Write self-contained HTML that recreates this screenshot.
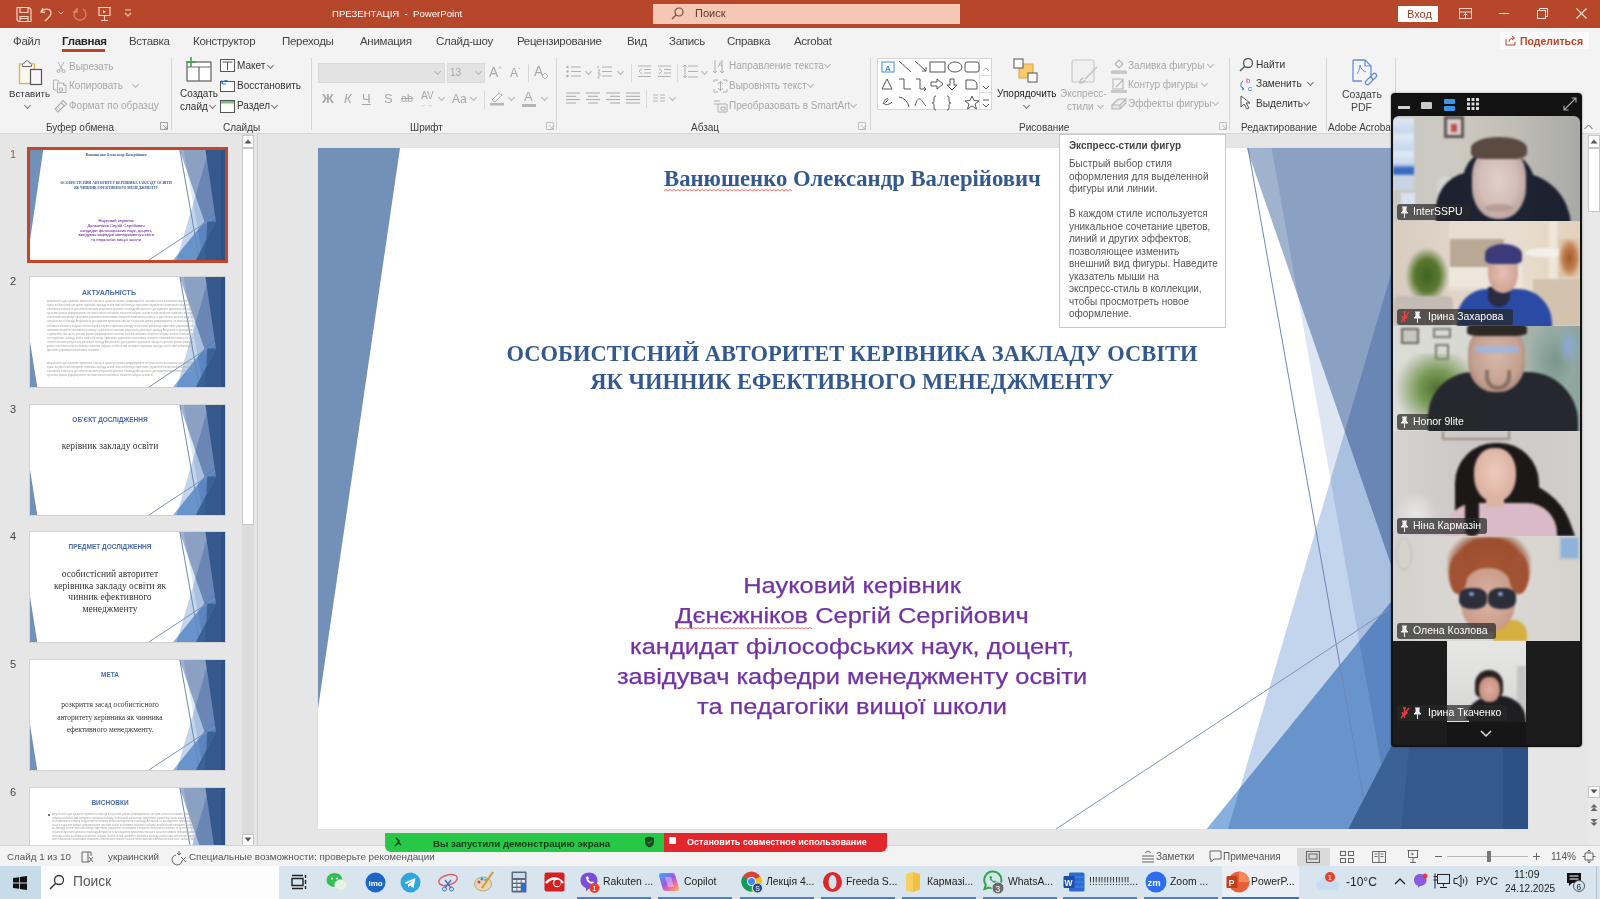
<!DOCTYPE html>
<html><head><meta charset="utf-8">
<style>
*{margin:0;padding:0;box-sizing:border-box}
html,body{width:1600px;height:899px;overflow:hidden;background:#e6e6e6;font-family:"Liberation Sans",sans-serif;color:#262626}
.a{position:absolute}
.t{position:absolute;white-space:nowrap;line-height:1}
svg{position:absolute;overflow:visible}
#title{left:0;top:0;width:1600px;height:28px;background:#b7472a}
#tabs{left:0;top:28px;width:1600px;height:27px;background:#f3f3f3}
#ribbon{left:0;top:55px;width:1600px;height:79px;background:#f3f3f3;border-bottom:1px solid #d6d6d6}
.tab{position:absolute;top:35px;font-size:11.5px;letter-spacing:-0.3px;color:#444}
.lbl{position:absolute;top:122px;font-size:10px;color:#3c3c3c}
.sep{position:absolute;top:58px;width:1px;height:72px;background:#d4d4d4}
.rt{position:absolute;font-size:11px;color:#333;white-space:nowrap;line-height:1}
.dis{color:#a8a8a8}
.chev{position:absolute;width:5px;height:5px;border-right:1px solid #777;border-bottom:1px solid #777;transform:rotate(45deg)}
.chev.dis{border-color:#b5b5b5}
</style></head><body>

<!-- TITLE BAR -->
<div id="title" class="a"></div>
<div class="t" style="left:332px;top:8.5px;font-size:9.6px;color:#fff">ПРЕЗЕНТАЦІЯ&nbsp;&nbsp;-&nbsp;&nbsp;PowerPoint</div>
<div class="a" style="left:653px;top:4px;width:307px;height:20px;background:#f5c8b6"></div>
<div class="t" style="left:695px;top:8px;font-size:11px;color:#5a3a30">Поиск</div>
<div class="a" style="left:1398px;top:6px;width:40px;height:16px;background:#fff"></div>
<div class="t" style="left:1407px;top:9px;font-size:11px;color:#9e3c22">Вход</div>

<!-- TABS -->
<div id="tabs" class="a"></div>
<div class="tab" style="left:13px">Файл</div>
<div class="tab" style="left:62px;font-weight:bold;color:#262626">Главная</div>
<div class="a" style="left:62px;top:49px;width:43px;height:3px;background:#b7472a"></div>
<div class="tab" style="left:129px">Вставка</div>
<div class="tab" style="left:193px">Конструктор</div>
<div class="tab" style="left:282px">Переходы</div>
<div class="tab" style="left:360px">Анимация</div>
<div class="tab" style="left:436px">Слайд-шоу</div>
<div class="tab" style="left:517px">Рецензирование</div>
<div class="tab" style="left:627px">Вид</div>
<div class="tab" style="left:669px">Запись</div>
<div class="tab" style="left:727px">Справка</div>
<div class="tab" style="left:794px">Acrobat</div>
<div class="a" style="left:1500px;top:32px;width:89px;height:17px;background:#fbfbfb"></div>
<div class="t" style="left:1520px;top:36px;font-size:10.5px;font-weight:bold;color:#b7472a">Поделиться</div>
<svg style="left:1505px;top:35px" width="12" height="11" viewBox="0 0 12 11"><path d="M1 4v6h9V7" fill="none" stroke="#b7472a"/><path d="M4 7c0-3 2-4 5-4M7 1l2.5 2L7 5" fill="none" stroke="#b7472a"/></svg>

<!-- RIBBON -->
<div id="ribbon" class="a"></div>
<div class="sep" style="left:171px"></div>
<div class="sep" style="left:311px"></div>
<div class="sep" style="left:556px"></div>
<div class="sep" style="left:870px"></div>
<div class="sep" style="left:1229px"></div>
<div class="sep" style="left:1326px"></div>
<div class="sep" style="left:1395px"></div>
<div class="lbl" style="left:46px">Буфер обмена</div>
<div class="lbl" style="left:223px">Слайды</div>
<div class="lbl" style="left:410px">Шрифт</div>
<div class="lbl" style="left:691px">Абзац</div>
<div class="lbl" style="left:1019px">Рисование</div>
<div class="lbl" style="left:1241px">Редактирование</div>
<div class="lbl" style="left:1328px">Adobe Acrobat</div>


<!-- clipboard group -->
<svg style="left:17px;top:59px" width="28" height="28" viewBox="0 0 28 28">
 <rect x="2.5" y="5" width="15" height="19.5" fill="#fbf7ee" stroke="#e2b24a" stroke-width="1.3"/>
 <path d="M5.5 7.5 v-2 c0-1 1-1.5 2-1.5 c0.5-1.5 1.5-2.3 2.5-2.3 s2 0.8 2.5 2.3 c1 0 2 0.5 2 1.5 v2z" fill="#f3f3f3" stroke="#6a6a6a" stroke-width="1"/>
 <rect x="13.5" y="10.5" width="11" height="15" fill="#f6f6fa" stroke="#555" stroke-width="1.2"/>
</svg>
<div class="rt" style="left:9px;top:89px;font-size:9.7px;color:#333">Вставить</div>
<div class="chev" style="left:25px;top:103px"></div>
<svg style="left:55px;top:61px" width="12" height="12" viewBox="0 0 12 12"><path d="M3 1 L8 10 M9 1 L4 10" stroke="#b0b0b0" stroke-width="1" fill="none"/><circle cx="3.5" cy="10" r="1.5" fill="none" stroke="#b0b0b0"/><circle cx="8.5" cy="10" r="1.5" fill="none" stroke="#b0b0b0"/></svg>
<div class="rt dis" style="left:69px;top:62px;font-size:10px">Вырезать</div>
<svg style="left:53px;top:79px" width="14" height="14" viewBox="0 0 14 14"><path d="M0.5 1h4l1 1v1 M0.5 1v10h3" fill="none" stroke="#b0b0b0"/><path d="M4.5 4h6l2.5 2.5v7h-8.5z M10.5 4v2.5h2.5 M6.5 9h3v3h-3z" fill="none" stroke="#b0b0b0"/></svg>
<div class="rt dis" style="left:69px;top:81px;font-size:10px">Копировать</div>
<div class="chev dis" style="left:133px;top:82px"></div>
<svg style="left:54px;top:99px" width="14" height="14" viewBox="0 0 14 14"><path d="M9 1.5l3.5 3.5-2 2-3.5-3.5z M7 4L1 10l3 3 6-6" fill="none" stroke="#b0b0b0" stroke-width="1.1"/><path d="M2.5 9.5l2 2M4 8l2 2" stroke="#b0b0b0" stroke-width="0.8"/></svg>
<div class="rt dis" style="left:69px;top:101px;font-size:10px">Формат по образцу</div>
<svg style="left:160px;top:122px" width="8" height="8" viewBox="0 0 8 8"><path d="M0.5 0.5h7v7h-7z M3 3l4 4 M7 4v3h-3" stroke="#8a8a8a" stroke-width="0.8" fill="none"/></svg>

<!-- slides group -->
<svg style="left:184px;top:56px" width="30" height="28" viewBox="0 0 30 28">
 <rect x="3" y="6" width="24" height="19" fill="#fff" stroke="#6a6a6a" stroke-width="1.3"/>
 <path d="M3 11h24 M15 11v14" stroke="#6a6a6a" stroke-width="1.2"/>
 <path d="M7 1v10 M2 6h10" stroke="#3fa34d" stroke-width="1.6"/>
</svg>
<div class="rt" style="left:180px;top:89px;font-size:10px">Создать</div>
<div class="rt" style="left:180px;top:102px;font-size:10px">слайд</div>
<div class="chev" style="left:210px;top:103px"></div>
<svg style="left:220px;top:59px" width="15" height="13" viewBox="0 0 15 13"><rect x="0.5" y="0.5" width="14" height="12" fill="#fff" stroke="#555"/><path d="M2.5 3h10 M7.5 3v8" stroke="#555"/></svg>
<div class="rt" style="left:237px;top:61px;font-size:10px">Макет</div>
<div class="chev" style="left:268px;top:63px"></div>
<svg style="left:220px;top:79px" width="15" height="13" viewBox="0 0 15 13"><rect x="0.5" y="2.5" width="14" height="10" fill="#fff" stroke="#555"/><path d="M2 5 A4 4 0 0 1 8 2 M2 1v4h4" stroke="#2d7fd0" fill="none"/></svg>
<div class="rt" style="left:237px;top:81px;font-size:10px">Восстановить</div>
<svg style="left:220px;top:99px" width="15" height="14" viewBox="0 0 15 14"><rect x="0.5" y="1.5" width="14" height="12" fill="#fff" stroke="#555"/><rect x="1" y="2" width="13" height="2.5" fill="#7bbf7a"/></svg>
<div class="rt" style="left:237px;top:101px;font-size:10px">Раздел</div>
<div class="chev" style="left:272px;top:103px"></div>

<!-- font group -->
<div class="a" style="left:318px;top:63px;width:127px;height:20px;background:#e3e3e3;border:1px solid #dadada"></div>
<div class="chev dis" style="left:435px;top:69px"></div>
<div class="a" style="left:447px;top:63px;width:38px;height:20px;background:#e3e3e3;border:1px solid #dadada"></div>
<div class="rt dis" style="left:450px;top:68px;font-size:10px">13</div>
<div class="chev dis" style="left:476px;top:69px"></div>
<div class="rt dis" style="left:489px;top:65px;font-size:14px">A<span style="font-size:7px;vertical-align:top">^</span></div>
<div class="rt dis" style="left:510px;top:67px;font-size:12px">A<span style="font-size:7px;vertical-align:top">ˇ</span></div>
<div class="a" style="left:528px;top:64px;width:1px;height:18px;background:#d8d8d8"></div>
<div class="rt dis" style="left:534px;top:64px;font-size:14px">A</div>
<svg style="left:541px;top:72px" width="8" height="8" viewBox="0 0 8 8"><path d="M1 4l3-3 3 3-3 3z" stroke="#b0b0b0" fill="none"/></svg>
<div class="rt dis" style="left:322px;top:92px;font-size:13px;font-weight:bold">Ж</div>
<div class="rt dis" style="left:344px;top:92px;font-size:13px;font-style:italic">К</div>
<div class="rt dis" style="left:362px;top:92px;font-size:13px;text-decoration:underline">Ч</div>
<div class="rt dis" style="left:384px;top:92px;font-size:13px">S</div>
<div class="rt dis" style="left:401px;top:93px;font-size:11px;text-decoration:line-through">ab</div>
<div class="rt dis" style="left:421px;top:91px;font-size:10px">AV</div>
<div class="rt dis" style="left:421px;top:102px;font-size:6px">←→</div>
<div class="chev dis" style="left:439px;top:95px"></div>
<div class="rt dis" style="left:452px;top:93px;font-size:12px">Aa</div>
<div class="chev dis" style="left:471px;top:95px"></div>
<div class="a" style="left:484px;top:91px;width:1px;height:18px;background:#d8d8d8"></div>
<svg style="left:489px;top:90px" width="16" height="16" viewBox="0 0 16 16"><path d="M3 10 L10 3 L13 5 L6 12 Z" stroke="#b0b0b0" fill="none"/><rect x="1" y="13" width="14" height="2.5" fill="#b5b5b5"/></svg>
<div class="chev dis" style="left:509px;top:95px"></div>
<div class="rt dis" style="left:524px;top:90px;font-size:13px">A</div>
<div class="a" style="left:522px;top:104px;width:14px;height:3px;background:#b5b5b5"></div>
<div class="chev dis" style="left:542px;top:95px"></div>
<svg style="left:546px;top:122px" width="8" height="8" viewBox="0 0 8 8"><path d="M0.5 0.5h7v7h-7z M3 3l4 4 M7 4v3h-3" stroke="#b5b5b5" stroke-width="0.8" fill="none"/></svg>


<!-- paragraph group -->
<svg style="left:566px;top:65px" width="15" height="13" viewBox="0 0 15 13"><g fill="#b0b0b0"><circle cx="1.5" cy="2" r="1.2"/><circle cx="1.5" cy="6.5" r="1.2"/><circle cx="1.5" cy="11" r="1.2"/></g><path d="M5 2h10M5 6.5h10M5 11h10" stroke="#b0b0b0"/></svg>
<div class="chev dis" style="left:586px;top:69px"></div>
<svg style="left:597px;top:65px" width="15" height="13" viewBox="0 0 15 13"><path d="M1 0.5v3M1 5h2l-2 3h2M1 9h2v2H1v2h2" stroke="#b0b0b0" stroke-width="0.8" fill="none"/><path d="M5 2h10M5 6.5h10M5 11h10" stroke="#b0b0b0"/></svg>
<div class="chev dis" style="left:618px;top:69px"></div>
<div class="a" style="left:631px;top:64px;width:1px;height:18px;background:#d8d8d8"></div>
<svg style="left:638px;top:65px" width="13" height="13" viewBox="0 0 13 13"><path d="M0 1h13M6 4.5h7M6 8h7M0 11.5h13M4 3.5L1 6.2 4 9" stroke="#b0b0b0" fill="none"/></svg>
<svg style="left:658px;top:65px" width="13" height="13" viewBox="0 0 13 13"><path d="M0 1h13M6 4.5h7M6 8h7M0 11.5h13M1 3.5L4 6.2 1 9" stroke="#b0b0b0" fill="none"/></svg>
<div class="a" style="left:677px;top:64px;width:1px;height:18px;background:#d8d8d8"></div>
<svg style="left:682px;top:64px" width="16" height="15" viewBox="0 0 16 15"><path d="M6 2h10M6 7.5h10M6 13h10M3 1v13M1 3l2-2 2 2M1 12l2 2 2-2" stroke="#b0b0b0" fill="none"/></svg>
<div class="chev dis" style="left:702px;top:69px"></div>
<svg style="left:713px;top:59px" width="14" height="15" viewBox="0 0 14 15"><path d="M2 1v13M0 12l2 2 2-2M9 1v13M7 12l2 2 2-2" stroke="#b0b0b0" fill="none"/><text x="5" y="8" font-size="7" fill="#b0b0b0" font-family="Liberation Sans">A</text></svg>
<div class="rt dis" style="left:729px;top:61px;font-size:10px">Направление текста</div>
<div class="chev dis" style="left:825px;top:62px"></div>
<svg style="left:713px;top:79px" width="15" height="14" viewBox="0 0 15 14"><path d="M1 3V1h4M10 1h4v2M14 10v3h-4M5 13H1v-3M7.5 2v10M5 5l2.5-2.5L10 5M5 9l2.5 2.5L10 9" stroke="#b0b0b0" fill="none"/></svg>
<div class="rt dis" style="left:729px;top:81px;font-size:10px">Выровнять текст</div>
<div class="chev dis" style="left:808px;top:82px"></div>
<svg style="left:713px;top:99px" width="15" height="14" viewBox="0 0 15 14"><path d="M1 2h6M1 5h4M5 5h9v8H5z M8 8h4v3H8z" stroke="#b0b0b0" fill="none"/></svg>
<div class="rt dis" style="left:729px;top:101px;font-size:10px">Преобразовать в SmartArt</div>
<div class="chev dis" style="left:851px;top:102px"></div>
<svg style="left:566px;top:92px" width="15" height="12" viewBox="0 0 15 12"><path d="M0 1h14M0 4.3h10M0 7.6h14M0 11h10" stroke="#a8a8a8"/></svg>
<svg style="left:586px;top:92px" width="15" height="12" viewBox="0 0 15 12"><path d="M0 1h14M2 4.3h10M0 7.6h14M2 11h10" stroke="#a8a8a8"/></svg>
<svg style="left:606px;top:92px" width="15" height="12" viewBox="0 0 15 12"><path d="M0 1h14M4 4.3h10M0 7.6h14M4 11h10" stroke="#a8a8a8"/></svg>
<svg style="left:626px;top:92px" width="15" height="12" viewBox="0 0 15 12"><path d="M0 1h14M0 4.3h14M0 7.6h14M0 11h14" stroke="#a8a8a8"/></svg>
<div class="a" style="left:646px;top:90px;width:1px;height:18px;background:#d8d8d8"></div>
<svg style="left:653px;top:94px" width="12" height="8" viewBox="0 0 12 8"><path d="M0 1h5M7 1h5M0 4h5M7 4h5M0 7h5M7 7h5" stroke="#b5b5b5"/></svg>
<div class="chev dis" style="left:670px;top:95px"></div>
<svg style="left:858px;top:122px" width="8" height="8" viewBox="0 0 8 8"><path d="M0.5 0.5h7v7h-7z M3 3l4 4 M7 4v3h-3" stroke="#b5b5b5" stroke-width="0.8" fill="none"/></svg>

<!-- drawing group -->
<div class="a" style="left:877px;top:58px;width:115px;height:52px;background:#fff;border:1px solid #d6d6d6"></div>
<div class="a" style="left:979px;top:58px;width:13px;height:52px;border-left:1px solid #e0e0e0"></div>
<div class="a" style="left:979px;top:75px;width:13px;height:1px;background:#dcdcdc"></div>
<div class="a" style="left:979px;top:92px;width:13px;height:1px;background:#dcdcdc"></div>
<svg style="left:877px;top:58px" width="115" height="52" viewBox="0 0 115 52">
 <g fill="none" stroke="#555" stroke-width="1">
  <rect x="5" y="4" width="12" height="10" stroke="#3c8fd6"/>
  <path d="M22 3 L34 14 M38 3 L49 13 M49 9v4h-4"/>
  <rect x="53" y="4" width="15" height="10"/>
  <ellipse cx="78" cy="9" rx="7" ry="5"/>
  <rect x="88" y="4" width="14" height="10" rx="2"/>
  <path d="M5 31 L10 21 L15 31 Z"/>
  <path d="M22 21 H27 V31 H34"/>
  <path d="M39 21 H43 V31 H49 M47 29l2 2-2 2"/>
  <path d="M54 24h6v-3l6 5-6 5v-3h-6z"/>
  <path d="M73 21h4v6h3l-5 5-5-5h3z"/>
  <path d="M89 22h6a5 5 0 0 1 5 5v4H89z"/>
  <path d="M6 46c3-8 8-6 3-2s4 3 6 0"/>
  <path d="M22 39 a12 12 0 0 1 10 10"/>
  <path d="M38 48 c4-14 7-4 11 0"/>
  <path d="M59 38c-2 0-2 1-2 4s-1 3-2 3c1 0 2 0 2 3s0 4 2 4"/>
  <path d="M70 38c2 0 2 1 2 4s1 3 2 3c-1 0-2 0-2 3s0 4-2 4"/>
  <path d="M95 38l2 4.5 5 .5-4 3 1.5 5-4.5-3-4.5 3 1.5-5-4-3 5-.5z"/>
 </g>
 <text x="8" y="13" font-size="8" fill="#3c8fd6" font-family="Liberation Sans" font-weight="bold">A</text>
 <path d="M106 13l3-3 3 3" stroke="#bbb" fill="none"/>
 <path d="M106 28l3 3 3-3" stroke="#555" fill="none"/>
 <path d="M106 42h6M106 46l3 3 3-3" stroke="#555" fill="none"/>
</svg>
<svg style="left:1013px;top:58px" width="26" height="26" viewBox="0 0 26 26">
 <rect x="6" y="6" width="14" height="14" fill="#f9c96b" stroke="#d9a43a"/>
 <rect x="1" y="1" width="9" height="9" fill="#fff" stroke="#555"/>
 <rect x="15" y="15" width="9" height="9" fill="#fff" stroke="#555"/>
</svg>
<div class="rt" style="left:997px;top:89px;font-size:10px;color:#222">Упорядочить</div>
<div class="chev" style="left:1024px;top:103px"></div>
<svg style="left:1071px;top:59px" width="28" height="27" viewBox="0 0 28 27"><rect x="1" y="1" width="22" height="22" rx="2" fill="#f0f0f0" stroke="#c8c8c8" stroke-width="1.2"/><path d="M26 8 L14 20 M12 19c-2 1-3 3-3 5 2 0 4-1 5-3" stroke="#c0c0c0" stroke-width="1.5" fill="none"/></svg>
<div class="rt dis" style="left:1060px;top:89px;font-size:10px">Экспресс-</div>
<div class="rt dis" style="left:1067px;top:102px;font-size:10px">стили</div>
<div class="chev dis" style="left:1098px;top:103px"></div>
<svg style="left:1111px;top:59px" width="16" height="15" viewBox="0 0 16 15"><path d="M4 5 L8 1 L12 5 L8 9 Z M1 12h14" stroke="#b5b5b5" stroke-width="1.2" fill="none"/><rect x="0" y="12" width="16" height="3" fill="#c8c8c8"/></svg>
<div class="rt dis" style="left:1128px;top:61px;font-size:10px">Заливка фигуры</div>
<div class="chev dis" style="left:1208px;top:62px"></div>
<svg style="left:1111px;top:78px" width="16" height="15" viewBox="0 0 16 15"><path d="M2 1h10v10H2z M5 9l7-7" stroke="#b5b5b5" stroke-width="1.1" fill="none"/><rect x="0" y="12" width="16" height="3" fill="#c8c8c8"/></svg>
<div class="rt dis" style="left:1128px;top:80px;font-size:10px">Контур фигуры</div>
<div class="chev dis" style="left:1202px;top:81px"></div>
<svg style="left:1111px;top:97px" width="16" height="14" viewBox="0 0 16 14"><path d="M1 8 L7 2 H15 L9 8 Z M1 8v4h8l6-6V2 M9 8v4" stroke="#b5b5b5" stroke-width="1.1" fill="#e6e6e6"/></svg>
<div class="rt dis" style="left:1128px;top:99px;font-size:10px">Эффекты фигуры</div>
<div class="chev dis" style="left:1213px;top:100px"></div>
<svg style="left:1219px;top:122px" width="8" height="8" viewBox="0 0 8 8"><path d="M0.5 0.5h7v7h-7z M3 3l4 4 M7 4v3h-3" stroke="#b5b5b5" stroke-width="0.8" fill="none"/></svg>

<!-- editing group -->
<svg style="left:1239px;top:57px" width="15" height="15" viewBox="0 0 15 15"><circle cx="9" cy="6" r="4.5" fill="none" stroke="#555" stroke-width="1.3"/><path d="M6 9 L1 14" stroke="#555" stroke-width="1.5"/></svg>
<div class="rt" style="left:1256px;top:60px;font-size:10.2px">Найти</div>
<svg style="left:1239px;top:76px" width="16" height="16" viewBox="0 0 16 16"><text x="7" y="7" font-size="8" fill="#c03fb8" font-family="Liberation Sans">b</text><text x="9" y="15" font-size="8" fill="#2d7fd0" font-family="Liberation Sans">c</text><path d="M4 5 C1 7 1 12 5 13 M3 11l2 2-2 1" stroke="#2d7fd0" fill="none"/></svg>
<div class="rt" style="left:1256px;top:79px;font-size:10.2px">Заменить</div>
<div class="chev" style="left:1308px;top:80px"></div>
<svg style="left:1240px;top:95px" width="12" height="15" viewBox="0 0 12 15"><path d="M1 1 L1 12 L4 9 L7 14 L9 13 L6 8 L10 8 Z" fill="#fff" stroke="#555"/></svg>
<div class="rt" style="left:1256px;top:99px;font-size:10.2px">Выделить</div>
<div class="chev" style="left:1304px;top:100px"></div>

<!-- acrobat group -->
<svg style="left:1350px;top:59px" width="27" height="27" viewBox="0 0 27 27"><path d="M3 1h12l6 6v11 M3 1v21h9" fill="#f4f7fc" stroke="#6a8fd8" stroke-width="1.3"/><path d="M15 1v6h6" fill="none" stroke="#6a8fd8" stroke-width="1.2"/><path d="M7 15c2-3 3-6 3-9 1 4 3 6 6 7" fill="none" stroke="#6a8fd8"/><path d="M16 22 l3-3 a2 2 0 0 1 3 3 l-3 3 a2 2 0 0 1-3-3z M20 18l3-3a2 2 0 0 1 3 3l-3 3" fill="none" stroke="#6a8fd8" stroke-width="1.3"/></svg>
<div class="rt" style="left:1342px;top:89px;font-size:10.5px;color:#444">Создать</div>
<div class="rt" style="left:1351px;top:102px;font-size:10.5px;color:#444">PDF</div>


<svg style="left:15px;top:6px" width="18" height="17" viewBox="0 0 18 17"><path d="M2 1.5h12l2 2v12H3.5L2 14z M5 1.5v5h8v-5 M5 15.5v-5h8v5 M5 12.5h8" fill="none" stroke="#f7d3c6" stroke-width="1.2"/></svg>
<svg style="left:40px;top:6px" width="14" height="16" viewBox="0 0 14 16"><path d="M3 2 L1 6 L5 6.5 M1.5 5.5 C4 2 11 2 11 7 C11 10 8 12 5 15" fill="none" stroke="#f7d3c6" stroke-width="1.3"/></svg>
<svg style="left:58px;top:11px" width="6" height="4" viewBox="0 0 6 4"><path d="M0.5 0.5L3 3l2.5-2.5" fill="none" stroke="#f3c4b4"/></svg>
<svg style="left:72px;top:7px" width="16" height="16" viewBox="0 0 16 16"><path d="M5 2 A6 6 0 1 0 11 2 M5 1v4H1" fill="none" stroke="#d88a72" stroke-width="1.3"/></svg>
<svg style="left:97px;top:6px" width="15" height="16" viewBox="0 0 15 16"><path d="M1 1.5h13 M2 1.5v8h11v-8 M7.5 9.5v5 M4 14.5h7" fill="none" stroke="#f7d3c6" stroke-width="1.2"/><path d="M6 4v3.5l3-1.7z" fill="#f7d3c6"/></svg>
<svg style="left:124px;top:9px" width="8" height="9" viewBox="0 0 8 9"><path d="M1 1h6M1 4l3 3 3-3" fill="none" stroke="#f3c4b4" stroke-width="1.1"/></svg>
<svg style="left:671px;top:7px" width="13" height="13" viewBox="0 0 13 13"><circle cx="8" cy="5" r="4" fill="none" stroke="#7b4a3c" stroke-width="1.2"/><path d="M5 8L1 12" stroke="#7b4a3c" stroke-width="1.3"/></svg>
<svg style="left:1459px;top:8px" width="13" height="11" viewBox="0 0 13 11"><rect x="0.5" y="0.5" width="12" height="10" fill="none" stroke="#f7d3c6"/><path d="M0.5 4h12 M6.5 4v6.5" stroke="#f7d3c6"/><path d="M4.5 7.5l2-2 2 2" fill="none" stroke="#f7d3c6"/></svg>
<div class="a" style="left:1499px;top:13px;width:10px;height:1px;background:#f7e0d6"></div>
<svg style="left:1537px;top:8px" width="11" height="11" viewBox="0 0 11 11"><rect x="0.5" y="2.5" width="8" height="8" fill="none" stroke="#f7e0d6"/><path d="M2.5 2.5v-2h8v8h-2" fill="none" stroke="#f7e0d6"/></svg>
<svg style="left:1576px;top:8px" width="11" height="11" viewBox="0 0 11 11"><path d="M0.5 0.5l10 10M10.5 0.5l-10 10" stroke="#f7e0d6" stroke-width="1.1"/></svg>
<svg style="left:1584px;top:124px" width="9" height="6" viewBox="0 0 9 6"><path d="M0.5 5l4-4 4 4" fill="none" stroke="#666"/></svg>


<!-- MAIN AREA -->

<svg width="0" height="0" style="position:absolute">
 <defs>
  <symbol id="deco" viewBox="0 0 1210 680" preserveAspectRatio="none">
   <polygon points="0,0 82,0 0,560" fill="#7290b8"/>
   <g style="isolation:isolate">
   <polygon points="953.6,0 1210,0 1210,680 1074.6,680" fill="#dde6f2" style="mix-blend-mode:multiply"/>
   <polygon points="928.6,0 1210,0 1210,300 1082,442" fill="#9fb3cf" style="mix-blend-mode:multiply"/>
   <polygon points="1082,442 1210,300 1210,680 888.7,680" fill="#88b0dc" style="mix-blend-mode:multiply"/>
   <polygon points="1110,0 1210,0 1210,680 910,680" fill="#c3d5ec" style="mix-blend-mode:multiply"/>
   </g>
   <line x1="930" y1="0" x2="1051" y2="680" stroke="#6a88b4" stroke-width="1" vector-effect="non-scaling-stroke"/>
   <line x1="738" y1="680" x2="1208" y2="370.6" stroke="#7d95b3" stroke-width="1" vector-effect="non-scaling-stroke"/>
     <polygon points="1089,0 1210,0 1210,680 1030.5,680 1154,442" fill="#35598c"/>
   <polygon points="1185,0 1210,0 1210,680 1185,680" fill="#2d5185"/>
   <polygon points="1030.5,680 1083,680 1092,590 1100,442 1154,442" fill="#3c6295"/>
</symbol>
  <symbol id="deco2" viewBox="0 0 1210 680" preserveAspectRatio="none">
   <polygon points="0,400 0,680 45,680" fill="#7290b8"/>
   <g style="isolation:isolate">
   <polygon points="953.6,0 1210,0 1210,680 1074.6,680" fill="#dde6f2" style="mix-blend-mode:multiply"/>
   <polygon points="928.6,0 1210,0 1210,300 1082,442" fill="#9fb3cf" style="mix-blend-mode:multiply"/>
   <polygon points="1082,442 1210,300 1210,680 888.7,680" fill="#88b0dc" style="mix-blend-mode:multiply"/>
   <polygon points="1110,0 1210,0 1210,680 910,680" fill="#c3d5ec" style="mix-blend-mode:multiply"/>
   </g>
   <line x1="930" y1="0" x2="1051" y2="680" stroke="#6a88b4" stroke-width="1" vector-effect="non-scaling-stroke"/>
   <line x1="738" y1="680" x2="1208" y2="370.6" stroke="#7d95b3" stroke-width="1" vector-effect="non-scaling-stroke"/>
     <polygon points="1089,0 1210,0 1210,680 1030.5,680 1154,442" fill="#35598c"/>
   <polygon points="1185,0 1210,0 1210,680 1185,680" fill="#2d5185"/>
   <polygon points="1030.5,680 1083,680 1092,590 1100,442 1154,442" fill="#3c6295"/>
</symbol>
 </defs>
</svg>

<!-- SLIDE PANE -->
<div class="a" style="left:242px;top:134px;width:12px;height:713px;background:#dcdcdc"></div>
<div class="a" style="left:242px;top:135px;width:12px;height:13px;background:#fff;border:1px solid #c6c6c6"></div>
<svg style="left:244px;top:138px" width="8" height="6" viewBox="0 0 8 6"><path d="M0.5 5.5L4 1.5 7.5 5.5z" fill="#555"/></svg>
<div class="a" style="left:242px;top:148px;width:12px;height:377px;background:#fff;border:1px solid #c6c6c6"></div>
<div class="a" style="left:242px;top:834px;width:12px;height:12px;background:#fff;border:1px solid #c6c6c6"></div>
<svg style="left:244px;top:837px" width="8" height="6" viewBox="0 0 8 6"><path d="M0.5 0.5L4 4.5 7.5 0.5z" fill="#555"/></svg>
<div class="a" style="left:257px;top:134px;width:1px;height:713px;background:#cfcfcf"></div>

<div class="t" style="left:10px;top:149px;font-size:11px;color:#c0503a">1</div>
<div class="a" style="left:27px;top:147px;width:201px;height:116px;border:3px solid #c0472c"></div>
<div class="a" style="left:30px;top:150px;width:195px;height:110px;background:#fff;overflow:hidden">
 <svg style="left:0;top:0" width="195" height="110"><use href="#deco"/></svg>
 <div class="a" style="left:0;top:0;width:1210px;height:680px;transform:scale(0.16116);transform-origin:0 0">
  <div class="t" style="left:346px;top:20px;font-family:'Liberation Serif';font-size:22.7px;font-weight:bold;color:#33598f">Ванюшенко Олександр Валерійович</div>
  <div class="t" style="left:34px;width:1000px;text-align:center;top:192px;font-family:'Liberation Serif';font-size:22.5px;font-weight:bold;color:#33598f;line-height:28px;white-space:pre">ОСОБИСТІСНИЙ АВТОРИТЕТ КЕРІВНИКА ЗАКЛАДУ ОСВІТИ
ЯК ЧИННИК ЕФЕКТИВНОГО МЕНЕДЖМЕНТУ</div>
  <div class="t" style="left:34px;width:1000px;text-align:center;top:423px;font-size:22px;color:#7232a4;line-height:30.3px;white-space:pre;transform:scaleX(1.155);transform-origin:500px 0;-webkit-text-stroke:0.25px #7232a4">Науковий керівник
Дєнєжніков Сергій Сергійович
кандидат філософських наук, доцент,
завідувач кафедри менеджменту освіти
та педагогіки вищої школи</div>
 </div>
</div>

<div class="t" style="left:10px;top:276px;font-size:11px;color:#444">2</div>
<div class="a" style="left:29px;top:276px;width:197px;height:112px;border:1px solid #d2d2d2"></div>
<div class="a" style="left:30px;top:277px;width:195px;height:110px;background:#fff;overflow:hidden">
 <svg style="left:0;top:0" width="195" height="110"><use href="#deco2"/></svg>
 <div class="t" style="left:0;width:158px;text-align:center;top:12px;font-size:7px;font-weight:bold;color:#4a6aa5">АКТУАЛЬНІСТЬ</div>
 <div class="a" style="left:17px;top:23px;width:146px;height:55px;overflow:hidden;font-size:2.6px;line-height:4.1px;color:#a4a4a4;text-align:justify;word-break:break-all">Актуальність дослідження зумовлена тим що в сучасних умовах реформування системи освіти особливого значення набуває особистісний авторитет керівника закладу освіти який забезпечує ефективне управління колективом створення позитивного клімату та досягнення високих результатів діяльності закладу Актуальність дослідження зумовлена тим що в сучасних умовах реформування системи освіти особливого значення набуває особистісний авторитет керівника закладу освіти який забезпечує ефективне управління колективом створення позитивного клімату та досягнення високих результатів діяльності закладу Актуальність дослідження зумовлена тим що в сучасних умовах реформування системи освіти особливого значення набуває особистісний авторитет керівника закладу освіти який забезпечує ефективне управління колективом створення позитивного клімату та досягнення високих результатів діяльності закладу Актуальність дослідження зумовлена тим що в сучасних умовах реформування системи освіти особливого значення набуває особистісний авторитет керівника закладу освіти який забезпечує ефективне управління колективом створення позитивного клімату та досягнення високих результатів діяльності закладу Актуальність дослідження зумовлена тим що в сучасних умовах реформування системи освіти особливого значення набуває особистісний авторитет керівника закладу освіти який забезпечує ефективне управління колективом створенн</div>
 <div class="a" style="left:17px;top:85px;width:146px;height:16px;overflow:hidden;font-size:2.6px;line-height:4.1px;color:#a4a4a4;text-align:justify;word-break:break-all">Актуальність дослідження зумовлена тим що в сучасних умовах реформування системи освіти особливого значення набуває особистісний авторитет керівника закладу освіти який забезпечує ефективне управління колективом створення позитивного клімату та досягнення високих результатів діяльності закладу Актуальність дослідження зумовлена тим що в сучасних умовах реформування системи освіти особливого значення набуває особистіс</div>
</div>

<div class="t" style="left:10px;top:404px;font-size:11px;color:#444">3</div>
<div class="a" style="left:29px;top:404px;width:197px;height:112px;border:1px solid #d2d2d2"></div>
<div class="a" style="left:30px;top:405px;width:195px;height:110px;background:#fff;overflow:hidden">
 <svg style="left:0;top:0" width="195" height="110"><use href="#deco2"/></svg>
 <div class="t" style="left:0;width:160px;text-align:center;top:12px;font-size:6.5px;font-weight:bold;color:#4a6aa5">ОБ'ЄКТ ДОСЛІДЖЕННЯ</div>
 <div class="t" style="left:0;width:160px;text-align:center;top:37px;font-size:9.5px;color:#333;font-family:'Liberation Serif'">керівник закладу освіти</div>
</div>

<div class="t" style="left:10px;top:531px;font-size:11px;color:#444">4</div>
<div class="a" style="left:29px;top:531px;width:197px;height:112px;border:1px solid #d2d2d2"></div>
<div class="a" style="left:30px;top:532px;width:195px;height:110px;background:#fff;overflow:hidden">
 <svg style="left:0;top:0" width="195" height="110"><use href="#deco2"/></svg>
 <div class="t" style="left:0;width:160px;text-align:center;top:12px;font-size:6.5px;font-weight:bold;color:#4a6aa5">ПРЕДМЕТ ДОСЛІДЖЕННЯ</div>
 <div class="t" style="left:0;width:160px;text-align:center;top:37px;font-size:9.5px;color:#333;font-family:'Liberation Serif';line-height:11.6px">особистісний авторитет<br>керівника закладу освіти як<br>чинник ефективного<br>менеджменту</div>
</div>

<div class="t" style="left:10px;top:659px;font-size:11px;color:#444">5</div>
<div class="a" style="left:29px;top:659px;width:197px;height:112px;border:1px solid #d2d2d2"></div>
<div class="a" style="left:30px;top:660px;width:195px;height:110px;background:#fff;overflow:hidden">
 <svg style="left:0;top:0" width="195" height="110"><use href="#deco2"/></svg>
 <div class="t" style="left:0;width:160px;text-align:center;top:12px;font-size:6.5px;font-weight:bold;color:#4a6aa5">МЕТА</div>
 <div class="t" style="left:0;width:160px;text-align:center;top:39px;font-size:7.5px;color:#333;font-family:'Liberation Serif';line-height:12.6px">розкриття засад особистісного<br>авторитету керівника як чинника<br>ефективного менеджменту.</div>
</div>

<div class="t" style="left:10px;top:787px;font-size:11px;color:#444">6</div>
<div class="a" style="left:29px;top:787px;width:197px;height:60px;border:1px solid #d2d2d2;border-bottom:none"></div>
<div class="a" style="left:30px;top:788px;width:195px;height:59px;background:#fff;overflow:hidden">
 <svg style="left:0;top:0" width="195" height="110"><use href="#deco2"/></svg>
 <div class="t" style="left:0;width:160px;text-align:center;top:12px;font-size:6.5px;font-weight:bold;color:#4a6aa5">ВИСНОВКИ</div>
 <div class="a" style="left:22px;top:25px;width:143px;height:27px;overflow:hidden;font-size:2.6px;line-height:3.6px;color:#a4a4a4;text-align:justify;word-break:break-all">Актуальність дослідження зумовлена тим що в сучасних умовах реформування системи освіти особливого значення набуває особистісний авторитет керівника закладу освіти який забезпечує ефективне управління колективом створення позитивного клімату та досягнення високих результатів діяльності закладу Актуальність дослідження зумовлена тим що в сучасних умовах реформування системи освіти особливого значення набуває особистісний авторитет керівника закладу освіти який забезпечує ефективне управління колективом створення позитивного клімату та досягнення високих результатів діяльності закладу Актуальність дослідження зумовлена тим що в сучасних умовах реформування системи освіти особливого значення набуває особистісний авторитет керівника закладу освіти який забезпечує ефективне управління колективом створення позитивного клімату та досягнення високих результатів діяльності закладу Актуальність дослідження зумовлена тим що в сучасних умовах реформування системи освіти особливого значення набуває</div>
 <div class="a" style="left:18px;top:26px;width:2px;height:2px;background:#777"></div>
</div>

<!-- MAIN SLIDE -->
<div class="a" style="left:318px;top:148px;width:1210px;height:681px;background:#fff;overflow:hidden;box-shadow:0 0 1px #ccc">
 <svg style="left:0;top:0" width="1210" height="681"><use href="#deco"/></svg>
</div>
<div class="t" style="left:664px;top:168px;font-family:'Liberation Serif';font-size:22.7px;font-weight:bold;color:#33598f">Ванюшенко Олександр Валерійович</div>
<svg style="left:664px;top:189px" width="123" height="4" viewBox="0 0 123 4"><path d="M0 2 l2 -1.5 2 1.5 2 -1.5 2 1.5 2 -1.5 2 1.5 2 -1.5 2 1.5 2 -1.5 2 1.5 2 -1.5 2 1.5 2 -1.5 2 1.5 2 -1.5 2 1.5 2 -1.5 2 1.5 2 -1.5 2 1.5 2 -1.5 2 1.5 2 -1.5 2 1.5 2 -1.5 2 1.5 2 -1.5 2 1.5 2 -1.5 2 1.5 2 -1.5 2 1.5 2 -1.5 2 1.5 2 -1.5 2 1.5 2 -1.5 2 1.5 2 -1.5 2 1.5 2 -1.5 2 1.5 2 -1.5 2 1.5 2 -1.5 2 1.5 2 -1.5 2 1.5 2 -1.5 2 1.5 2 -1.5 2 1.5 2 -1.5 2 1.5 2 -1.5 2 1.5 2 -1.5 2 1.5 2 -1.5 2 1.5 2 -1.5 2 1.5 2 -1.5 2 1.5" fill="none" stroke="#e05050" stroke-width="0.8"/></svg>
<div class="t" style="left:352px;width:1000px;text-align:center;top:340px;font-family:'Liberation Serif';font-size:22.5px;font-weight:bold;color:#33598f;line-height:28px;white-space:pre">ОСОБИСТІСНИЙ АВТОРИТЕТ КЕРІВНИКА ЗАКЛАДУ ОСВІТИ
ЯК ЧИННИК ЕФЕКТИВНОГО МЕНЕДЖМЕНТУ</div>
<div id="sub" class="t" style="left:352px;width:1000px;text-align:center;top:571px;font-size:22px;color:#7232a4;line-height:30.3px;white-space:pre;transform:scaleX(1.155);transform-origin:500px 0;-webkit-text-stroke:0.25px #7232a4">Науковий керівник
Дєнєжніков Сергій Сергійович
кандидат філософських наук, доцент,
завідувач кафедри менеджменту освіти
та педагогіки вищої школи</div>

<svg style="left:676px;top:627px" width="136" height="4" viewBox="0 0 136 4"><path d="M0 2 l2 -1.5 2 1.5 l2 -1.5 2 1.5 l2 -1.5 2 1.5 l2 -1.5 2 1.5 l2 -1.5 2 1.5 l2 -1.5 2 1.5 l2 -1.5 2 1.5 l2 -1.5 2 1.5 l2 -1.5 2 1.5 l2 -1.5 2 1.5 l2 -1.5 2 1.5 l2 -1.5 2 1.5 l2 -1.5 2 1.5 l2 -1.5 2 1.5 l2 -1.5 2 1.5 l2 -1.5 2 1.5 l2 -1.5 2 1.5 l2 -1.5 2 1.5 l2 -1.5 2 1.5 l2 -1.5 2 1.5 l2 -1.5 2 1.5 l2 -1.5 2 1.5 l2 -1.5 2 1.5 l2 -1.5 2 1.5 l2 -1.5 2 1.5 l2 -1.5 2 1.5 l2 -1.5 2 1.5 l2 -1.5 2 1.5 l2 -1.5 2 1.5 l2 -1.5 2 1.5 l2 -1.5 2 1.5 l2 -1.5 2 1.5 l2 -1.5 2 1.5 l2 -1.5 2 1.5" fill="none" stroke="#e05050" stroke-width="0.8"/></svg>
<!-- right scrollbar -->
<div class="a" style="left:1588px;top:134px;width:12px;height:713px;background:#e9e9e9"></div>
<div class="a" style="left:1588px;top:135px;width:12px;height:13px;background:#fff;border:1px solid #c6c6c6"></div>
<svg style="left:1590px;top:138px" width="8" height="6" viewBox="0 0 8 6"><path d="M0.5 5.5L4 1.5 7.5 5.5z" fill="#555"/></svg>
<div class="a" style="left:1588px;top:148px;width:12px;height:64px;background:#fff;border:1px solid #c6c6c6"></div>
<div class="a" style="left:1588px;top:786px;width:12px;height:12px;background:#fff;border:1px solid #c6c6c6"></div>
<svg style="left:1590px;top:789px" width="8" height="6" viewBox="0 0 8 6"><path d="M0.5 0.5L4 4.5 7.5 0.5z" fill="#555"/></svg>
<svg style="left:1589px;top:802px" width="10" height="24" viewBox="0 0 10 24"><path d="M1.5 5.5L5 2l3.5 3.5z M1.5 9L5 5.5 8.5 9z M1.5 17L5 20.5 8.5 17z M1.5 20.5L5 24 8.5 20.5z" fill="#666"/></svg>


<!-- TOOLTIP -->
<div class="a" style="left:1059px;top:134px;width:167px;height:194px;background:#fff;border:1px solid #c8c8c8"></div>
<div class="t" style="left:1069px;top:141px;font-size:10px;font-weight:bold;color:#444">Экспресс-стили фигур</div>
<div class="t" style="left:1069px;top:158px;font-size:10px;color:#555;line-height:12.5px;white-space:pre">Быстрый выбор стиля
оформления для выделенной
фигуры или линии.

В каждом стиле используется
уникальное сочетание цветов,
линий и других эффектов,
позволяющее изменить
внешний вид фигуры. Наведите
указатель мыши на
экспресс-стиль в коллекции,
чтобы просмотреть новое
оформление.</div>

<!-- ZOOM PANEL -->
<div class="a" style="left:1391px;top:93px;width:191px;height:654px;background:#121212;border-radius:4px;box-shadow:0 0 2px rgba(0,0,0,.5)"></div>
<div class="a" style="left:1398px;top:106px;width:12px;height:3px;background:#d0d0d0"></div>
<div class="a" style="left:1421px;top:102px;width:11px;height:7px;background:#c8c8c8;border-radius:1px"></div>
<div class="a" style="left:1444px;top:99px;width:11px;height:5px;background:#3d95e8;border-radius:1px"></div>
<div class="a" style="left:1444px;top:106px;width:11px;height:5px;background:#3d95e8;border-radius:1px"></div>
<svg style="left:1467px;top:98px" width="12" height="12" viewBox="0 0 12 12"><g fill="#d8d8d8"><rect x="0" y="0" width="3" height="3"/><rect x="4.5" y="0" width="3" height="3"/><rect x="9" y="0" width="3" height="3"/><rect x="0" y="4.5" width="3" height="3"/><rect x="4.5" y="4.5" width="3" height="3"/><rect x="9" y="4.5" width="3" height="3"/><rect x="0" y="9" width="3" height="3"/><rect x="4.5" y="9" width="3" height="3"/><rect x="9" y="9" width="3" height="3"/></g></svg>
<svg style="left:1563px;top:97px" width="14" height="14" viewBox="0 0 14 14"><path d="M8.5 1H13v4.5M13 1L1 13M1 8.5V13h4.5" fill="none" stroke="#a8a8a8" stroke-width="1.1"/></svg>

<!-- tile 1 -->
<div class="a" style="left:1393px;top:116px;width:187px;height:105px;overflow:hidden;border-radius:6px 6px 0 0;background:linear-gradient(90deg,#c8c8c0 0%,#cdc9c0 35%,#c0bdb6 65%,#a8a9a6 100%)">
 <div class="a" style="left:0;top:0;width:187px;height:105px;filter:blur(1px)">
  <div class="a" style="left:0;top:2px;width:21px;height:72px;background:linear-gradient(#dfe8f4 0%,#c8d8ee 20%,#e0e8f4 24%,#c8d8ee 44%,#e0e8f4 48%,#c8d8ee 64%,#3a6ac0 70%,#3a6ac0 78%,#c8d4e4 80%)"></div>
  <div class="a" style="left:8px;top:77px;width:14px;height:12px;background:#d8e2f0"></div>
  <div class="a" style="left:51px;top:0;width:20px;height:22px;background:#5e5850"></div>
  <div class="a" style="left:54px;top:3px;width:14px;height:16px;background:#d8cccc"></div>
  <div class="a" style="left:58px;top:8px;width:6px;height:8px;background:#c05050"></div>
  <div class="a" style="left:44px;top:60px;width:16px;height:30px;background:#d4d4d0;border-radius:8px 8px 0 0"></div>
  <div class="a" style="left:43px;top:56px;width:135px;height:55px;background:#1c2130;border-radius:40px 60px 0 0"></div>
  <div class="a" style="left:70px;top:34px;width:72px;height:71px;background:#1e2332;border-radius:30px 36px 10px 10px"></div>
  <div class="a" style="left:79px;top:33px;width:54px;height:70px;background:radial-gradient(ellipse at 48% 45%,#e0d0cc 0%,#d2bcb6 50%,#b09890 85%,#8a7670 100%);border-radius:38% 38% 45% 45%"></div>
  <div class="a" style="left:78px;top:21px;width:56px;height:22px;background:#5a4a40;border-radius:50% 50% 25% 25%"></div>
  <div class="a" style="left:92px;top:88px;width:28px;height:8px;background:#a88a84;border-radius:50%;opacity:.6"></div>
 </div>
</div>
<!-- tile 2 -->
<div class="a" style="left:1393px;top:221px;width:187px;height:105px;overflow:hidden;background:linear-gradient(90deg,#d8ccc0 0%,#e2d6ca 40%,#e8dccc 70%,#e2d2bc 100%)">
 <div class="a" style="left:0;top:0;width:187px;height:105px;filter:blur(1.2px)">
  <div class="a" style="left:56px;top:0;width:74px;height:70px;background:#e6dcd0"></div>
  <div class="a" style="left:57px;top:18px;width:54px;height:30px;background:#b8a894"></div>
  <div class="a" style="left:56px;top:46px;width:74px;height:20px;background:#ece6dc"></div>
  <div class="a" style="left:156px;top:0;width:8px;height:105px;background:#efe6da"></div>
  <div class="a" style="left:132px;top:27px;width:40px;height:9px;background:#f4efe8;border-radius:50%"></div>
  <div class="a" style="left:166px;top:18px;width:21px;height:38px;background:radial-gradient(ellipse,#a0582e 0%,#c48050 45%,#dcc4a8 75%)"></div>
  <div class="a" style="left:12px;top:26px;width:44px;height:52px;background:radial-gradient(ellipse at 50% 55%,#3e6424 0%,#58782e 40%,rgba(110,130,80,0) 70%)"></div>
  <div class="a" style="left:0;top:75px;width:60px;height:30px;background:#c4bcb4;border-radius:6px"></div>
  <div class="a" style="left:140px;top:58px;width:47px;height:47px;background:#d2c2ae"></div>
  <div class="a" style="left:64px;top:68px;width:95px;height:40px;background:#2a4aa6;border-radius:30px 34px 0 0"></div>
  <div class="a" style="left:95px;top:66px;width:22px;height:20px;background:#2a2a40;border-radius:0 0 12px 12px"></div>
  <div class="a" style="left:95px;top:32px;width:30px;height:40px;background:radial-gradient(ellipse at 50% 50%,#e4c0b4,#d0a494 70%,#b08474);border-radius:42% 42% 48% 48%"></div>
  <div class="a" style="left:92px;top:23px;width:37px;height:20px;background:#3c3a7a;border-radius:50% 50% 20% 20%"></div>
 </div>
</div>
<!-- tile 3 -->
<div class="a" style="left:1393px;top:326px;width:187px;height:105px;overflow:hidden;background:linear-gradient(90deg,#dcdcd8 0%,#d8d8d2 40%,#a8b4ae 70%,#8ea49c 100%)">
 <div class="a" style="left:0;top:0;width:187px;height:105px;filter:blur(1.3px)">
  <div class="a" style="left:8px;top:2px;width:18px;height:16px;border:2px solid #6a6a64;background:#c8c8c0"></div>
  <div class="a" style="left:40px;top:2px;width:18px;height:10px;border:2px solid #7a7a74"></div>
  <div class="a" style="left:42px;top:18px;width:14px;height:16px;border:2px solid #7a7a74"></div>
  <div class="a" style="left:0;top:28px;width:80px;height:77px;background:radial-gradient(ellipse at 55% 45%,#4e7030 0%,#7a9a58 30%,rgba(190,200,180,0) 68%)"></div>
  <div class="a" style="left:138px;top:0;width:49px;height:70px;background:radial-gradient(ellipse,#7a968c 0%,#90a8a0 50%,rgba(150,170,160,0) 80%)"></div>
  <div class="a" style="left:165px;top:0;width:22px;height:40px;background:radial-gradient(ellipse,#8aa8d8,rgba(140,170,210,0) 70%)"></div>
  <div class="a" style="left:35px;top:46px;width:150px;height:62px;background:#25282e;border-radius:45px 50px 0 0"></div>
  <div class="a" style="left:75px;top:0;width:57px;height:66px;background:radial-gradient(ellipse at 50% 45%,#d6b8aa,#c4a090 60%,#9a7a6c 90%);border-radius:40% 40% 45% 45%"></div>
  <div class="a" style="left:74px;top:-6px;width:60px;height:16px;background:#2e2824;border-radius:50% 50% 20% 20%"></div>
  <div class="a" style="left:82px;top:20px;width:44px;height:7px;background:#9ab8e4;border-radius:4px;opacity:.8"></div>
  <div class="a" style="left:92px;top:44px;width:26px;height:20px;border:4px solid #5a4a44;border-top:none;border-radius:0 0 14px 14px;opacity:.55"></div>
 </div>
</div>
<!-- tile 4 -->
<div class="a" style="left:1393px;top:431px;width:187px;height:105px;overflow:hidden;background:linear-gradient(90deg,#d6d2d2 0%,#ccc8c8 40%,#d2cece 100%)">
 <div class="a" style="left:0;top:0;width:187px;height:105px;filter:blur(1.3px)">
  <div class="a" style="left:49px;top:0;width:68px;height:9px;border:2px solid #9a8a7c;border-top:none"></div>
  <div class="a" style="left:0;top:60px;width:45px;height:45px;background:radial-gradient(ellipse,#e8e6e6,rgba(230,230,230,0) 70%)"></div>
  <div class="a" style="left:62px;top:12px;width:84px;height:93px;background:#1c1818;border-radius:40px 40px 10px 10px"></div>
  <div class="a" style="left:120px;top:50px;width:52px;height:55px;background:#1c1818;border-radius:10px 40px 0 0;transform:skewX(20deg)"></div>
  <div class="a" style="left:52px;top:72px;width:112px;height:35px;background:#d9bac6;border-radius:30px 30px 0 0"></div>
  <div class="a" style="left:72px;top:64px;width:14px;height:41px;background:#1c1818;border-radius:6px"></div>
  <div class="a" style="left:81px;top:17px;width:42px;height:54px;background:radial-gradient(ellipse at 50% 45%,#ecccbe,#dcb2a2 65%,#c09484);border-radius:45% 45% 48% 48%"></div>
  <div class="a" style="left:93px;top:64px;width:18px;height:12px;background:#dcb4a6"></div>
 </div>
</div>
<!-- tile 5 -->
<div class="a" style="left:1393px;top:536px;width:187px;height:105px;overflow:hidden;background:linear-gradient(90deg,#d4d2ce 0%,#dcd9d4 50%,#d6d3ce 100%)">
 <div class="a" style="left:0;top:0;width:187px;height:105px;filter:blur(1.3px)">
  <div class="a" style="left:166px;top:0;width:21px;height:24px;background:#8eb2d8;border:2px solid #c0c8d0"></div>
  <div class="a" style="left:3px;top:2px;width:16px;height:32px;border:1px solid #b8bcb8;border-radius:50%"></div>
  <div class="a" style="left:100px;top:84px;width:34px;height:21px;background:#d4b040;border-radius:14px 14px 0 0"></div>
  <div class="a" style="left:54px;top:1px;width:84px;height:66px;background:radial-gradient(ellipse at 50% 45%,#a65634 0%,#9c4e30 55%,rgba(170,100,70,0) 75%)"></div>
  <div class="a" style="left:68px;top:32px;width:54px;height:64px;background:radial-gradient(ellipse at 50% 50%,#dcb4a4,#cc9e8c 65%,#aa806e);border-radius:45%"></div>
  <div class="a" style="left:56px;top:18px;width:18px;height:40px;background:#a25234;border-radius:50%"></div>
  <div class="a" style="left:116px;top:18px;width:20px;height:40px;background:#a25234;border-radius:50%"></div>
  <div class="a" style="left:66px;top:52px;width:28px;height:21px;background:#2c2e3a;border-radius:40%"></div>
  <div class="a" style="left:95px;top:52px;width:28px;height:21px;background:#2c2e3a;border-radius:40%"></div>
  <div class="a" style="left:76px;top:56px;width:5px;height:4px;background:#8aa8e0;border-radius:50%"></div>
  <div class="a" style="left:105px;top:56px;width:5px;height:4px;background:#8aa8e0;border-radius:50%"></div>
 </div>
</div>
<!-- tile 6 -->
<div class="a" style="left:1393px;top:641px;width:187px;height:104px;overflow:hidden;background:#1c1c1c;border-radius:0 0 4px 4px">
 <div class="a" style="left:54px;top:0;width:79px;height:81px;overflow:hidden;background:linear-gradient(#e6e6e4,#dededc 55%,#d4d4d2)">
  <div class="a" style="left:0;top:0;width:79px;height:81px;filter:blur(0.9px)">
   <div class="a" style="left:70px;top:25px;width:9px;height:55px;background:#c4c4c2"></div>
   <div class="a" style="left:19px;top:55px;width:60px;height:30px;background:#1e1e22;border-radius:25px 25px 0 0"></div>
   <div class="a" style="left:28px;top:29px;width:28px;height:28px;background:#2a2220;border-radius:50% 50% 25% 25%"></div>
   <div class="a" style="left:32px;top:36px;width:21px;height:25px;background:radial-gradient(ellipse,#deb0a0,#c89080 70%);border-radius:45%"></div>
  </div>
 </div>
 <div class="a" style="left:54px;top:81px;width:79px;height:23px;background:#161616"></div>
 <svg style="left:87px;top:89px" width="12" height="7" viewBox="0 0 12 7"><path d="M1 1l5 5 5-5" fill="none" stroke="#ddd" stroke-width="1.5"/></svg>
 <div class="a" style="left:54px;top:79px;width:22px;height:2px;background:#e0e0e0"></div>
</div>
<!-- labels -->
<div class="a" style="left:1397px;top:204px;width:74px;height:16px;background:rgba(40,40,40,.72);border-radius:3px"></div>
<svg style="left:1400px;top:206px" width="9" height="12" viewBox="0 0 9 12"><path d="M2 1h5M3 1v4L1 7h7L6 5V1M4.5 7v5" fill="#eee" stroke="#eee"/></svg>
<div class="t" style="left:1413px;top:206px;font-size:10.5px;color:#fff">InterSSPU</div>

<div class="a" style="left:1397px;top:309px;width:116px;height:16px;background:rgba(40,40,40,.72);border-radius:3px"></div>
<svg style="left:1400px;top:311px" width="10" height="12" viewBox="0 0 10 12"><path d="M3 1h3M4.5 1v6M2 5c0 3 5 3 5 0M4.5 8v3M1 11L9 1" fill="none" stroke="#e84040" stroke-width="1.4"/></svg>
<svg style="left:1413px;top:311px" width="9" height="12" viewBox="0 0 9 12"><path d="M2 1h5M3 1v4L1 7h7L6 5V1M4.5 7v5" fill="#eee" stroke="#eee"/></svg>
<div class="t" style="left:1428px;top:311px;font-size:10.5px;color:#fff">Ірина Захарова</div>

<div class="a" style="left:1397px;top:414px;width:79px;height:16px;background:rgba(40,40,40,.72);border-radius:3px"></div>
<svg style="left:1400px;top:416px" width="9" height="12" viewBox="0 0 9 12"><path d="M2 1h5M3 1v4L1 7h7L6 5V1M4.5 7v5" fill="#eee" stroke="#eee"/></svg>
<div class="t" style="left:1413px;top:416px;font-size:10.5px;color:#fff">Honor 9lite</div>

<div class="a" style="left:1397px;top:518px;width:90px;height:16px;background:rgba(40,40,40,.72);border-radius:3px"></div>
<svg style="left:1400px;top:520px" width="9" height="12" viewBox="0 0 9 12"><path d="M2 1h5M3 1v4L1 7h7L6 5V1M4.5 7v5" fill="#eee" stroke="#eee"/></svg>
<div class="t" style="left:1413px;top:520px;font-size:10.5px;color:#fff">Ніна Кармазін</div>

<div class="a" style="left:1397px;top:623px;width:99px;height:16px;background:rgba(40,40,40,.72);border-radius:3px"></div>
<svg style="left:1400px;top:625px" width="9" height="12" viewBox="0 0 9 12"><path d="M2 1h5M3 1v4L1 7h7L6 5V1M4.5 7v5" fill="#eee" stroke="#eee"/></svg>
<div class="t" style="left:1413px;top:625px;font-size:10.5px;color:#fff">Олена Козлова</div>

<div class="a" style="left:1397px;top:705px;width:110px;height:16px;background:rgba(40,40,40,.72);border-radius:3px"></div>
<svg style="left:1400px;top:707px" width="10" height="12" viewBox="0 0 10 12"><path d="M3 1h3M4.5 1v6M2 5c0 3 5 3 5 0M4.5 8v3M1 11L9 1" fill="none" stroke="#e84040" stroke-width="1.4"/></svg>
<svg style="left:1413px;top:707px" width="9" height="12" viewBox="0 0 9 12"><path d="M2 1h5M3 1v4L1 7h7L6 5V1M4.5 7v5" fill="#eee" stroke="#eee"/></svg>
<div class="t" style="left:1428px;top:707px;font-size:10.5px;color:#fff">Ірина Ткаченко</div>

<!-- STATUS BAR -->
<div class="a" style="left:0;top:845px;width:1600px;height:21px;background:#f3f3f3;border-top:1px solid #d4d4d4"></div>
<!-- SHARE BAR -->
<div class="a" style="left:385px;top:833px;width:279px;height:19px;background:#26c846;border-radius:0 0 0 6px"></div>
<div class="a" style="left:664px;top:833px;width:223px;height:19px;background:#e3262c;border-radius:0 0 6px 0"></div>
<svg style="left:394px;top:837px" width="10" height="10" viewBox="0 0 10 10"><path d="M2 1l3 3-1 1 3 3M1 9l3-3" stroke="#174a22" stroke-width="1.6" fill="none"/></svg>
<div class="t" style="left:433px;top:838.5px;font-size:9.7px;font-weight:bold;color:#173a1a">Вы запустили демонстрацию экрана</div>
<svg style="left:644px;top:836px" width="11" height="12" viewBox="0 0 11 12"><path d="M5.5 0.5L10 2v4c0 3-2.5 5-4.5 5.5C3.5 11 1 9 1 6V2z" fill="#1c4a24"/><path d="M3.5 6l1.5 1.5L8 4.5" stroke="#26c846" fill="none"/></svg>
<div class="a" style="left:669px;top:837px;width:7px;height:7px;background:#fff;border-radius:1px"></div>
<div class="t" style="left:687px;top:838px;font-size:9px;font-weight:bold;color:#fff">Остановить совместное использование</div>


<div class="t" style="left:7px;top:852px;font-size:9.8px;color:#555">Слайд 1 из 10</div>
<svg style="left:81px;top:851px" width="13" height="12" viewBox="0 0 13 12"><path d="M1 1h6v10H1z M7 1h3v4 M7 11h1 M8 6l4 5M12 6l-4 5" fill="none" stroke="#666"/></svg>
<div class="t" style="left:108px;top:852px;font-size:9.8px;color:#555">украинский</div>
<svg style="left:173px;top:850px" width="14" height="13" viewBox="0 0 14 13"><path d="M6 1v4M4 3l2 2 2-2M3 5a5 5 0 1 0 6 6M8 7l5 5M13 7l-5 5" fill="none" stroke="#666"/></svg>
<div class="t" style="left:189px;top:852px;font-size:9.8px;color:#555">Специальные возможности: проверьте рекомендации</div>
<svg style="left:1141px;top:850px" width="14" height="13" viewBox="0 0 14 13"><path d="M4 3l3-2 3 2M1 6h12M1 9h12M1 12h12" fill="none" stroke="#666"/></svg>
<div class="t" style="left:1156px;top:852px;font-size:10px;color:#555">Заметки</div>
<svg style="left:1209px;top:850px" width="13" height="13" viewBox="0 0 13 13"><path d="M1 1h11v8H5l-3 3V9H1z" fill="none" stroke="#666"/></svg>
<div class="t" style="left:1223px;top:852px;font-size:10px;color:#555">Примечания</div>
<div class="a" style="left:1297px;top:848px;width:33px;height:18px;background:#dadada"></div>
<svg style="left:1306px;top:851px" width="14" height="12" viewBox="0 0 14 12"><rect x="0.5" y="0.5" width="13" height="11" fill="none" stroke="#666"/><rect x="3" y="3" width="8" height="5" fill="none" stroke="#666"/></svg>
<svg style="left:1340px;top:851px" width="14" height="12" viewBox="0 0 14 12"><rect x="0.5" y="0.5" width="5" height="4" fill="none" stroke="#666"/><rect x="8.5" y="0.5" width="5" height="4" fill="none" stroke="#666"/><rect x="0.5" y="7.5" width="5" height="4" fill="none" stroke="#666"/><rect x="8.5" y="7.5" width="5" height="4" fill="none" stroke="#666"/></svg>
<svg style="left:1372px;top:851px" width="14" height="12" viewBox="0 0 14 12"><path d="M0.5 0.5h13v11H0.5z M7 0.5v11 M2.5 3h3M2.5 5.5h3M8.5 3h3M8.5 5.5h3" fill="none" stroke="#666"/></svg>
<svg style="left:1407px;top:850px" width="12" height="13" viewBox="0 0 12 13"><path d="M0.5 0.5h11 M1.5 0.5v7h9v-7 M6 7.5v5 M3 12.5h6" fill="none" stroke="#666"/><path d="M4.5 2.5v3l2.5-1.5z" fill="#666"/></svg>
<div class="a" style="left:1435px;top:856px;width:7px;height:1px;background:#666"></div>
<div class="a" style="left:1447px;top:856px;width:81px;height:1px;background:#b8b8b8"></div>
<div class="a" style="left:1487px;top:851px;width:4px;height:11px;background:#777"></div>
<div class="a" style="left:1533px;top:856px;width:7px;height:1px;background:#666"></div>
<div class="a" style="left:1536px;top:853px;width:1px;height:7px;background:#666"></div>
<div class="t" style="left:1551px;top:852px;font-size:10px;color:#555">114%</div>
<svg style="left:1582px;top:849px" width="14" height="15" viewBox="0 0 14 15"><path d="M3 4h8v7H3z M7 1v3M5.5 2.5L7 1l1.5 1.5M7 11v3M5.5 12.5L7 14l1.5-1.5M0.5 7.5H3M13.5 7.5H11" fill="none" stroke="#666"/></svg>

<!-- TASKBAR -->
<div class="a" style="left:0;top:866px;width:1600px;height:33px;background:#d8e5ee"></div>
<div class="a" style="left:0;top:866px;width:41px;height:33px;background:#c6dde9"></div>
<svg style="left:13px;top:876px" width="14" height="14" viewBox="0 0 14 14"><path d="M0 2l6-0.8V6.6H0z M6.8 1.1L14 0v6.6H6.8z M0 7.4h6v5.4L0 12z M6.8 7.4H14V14l-7.2-1z" fill="#111"/></svg>
<div class="a" style="left:41px;top:866px;width:238px;height:33px;background:#fdfdfd"></div>
<svg style="left:49px;top:874px" width="16" height="16" viewBox="0 0 16 16"><circle cx="10" cy="6" r="4.5" fill="none" stroke="#333" stroke-width="1.3"/><path d="M6.8 9.2L1 15" stroke="#333" stroke-width="1.4"/></svg>
<div class="t" style="left:73px;top:875px;font-size:13.8px;color:#555">Поиск</div>

<svg style="left:291px;top:874px" width="17" height="16" viewBox="0 0 17 16"><path d="M1 1.5h11 M1 14.5h11 M1 4.5h11v7H1z M14.5 1v3 M14.5 6v4 M14.5 12v3" fill="none" stroke="#222" stroke-width="1.4"/></svg>
<svg style="left:326px;top:872px" width="22" height="20" viewBox="0 0 22 20"><ellipse cx="8.5" cy="8" rx="8" ry="7" fill="#2dc24d"/><ellipse cx="15" cy="13" rx="6.5" ry="5.5" fill="#e8f0ea" stroke="#d0d8d2" stroke-width="0.5"/><circle cx="6" cy="6.5" r="1.1" fill="#fff"/><circle cx="11" cy="6.5" r="1.1" fill="#fff"/></svg>
<svg style="left:365px;top:872px" width="21" height="21" viewBox="0 0 21 21"><circle cx="10.5" cy="10.5" r="10" fill="#1e65c8"/><text x="3.5" y="13.5" font-size="8" font-weight="bold" fill="#fff" font-family="Liberation Sans">imo</text></svg>
<svg style="left:400px;top:872px" width="21" height="21" viewBox="0 0 21 21"><circle cx="10.5" cy="10.5" r="10" fill="#2ea6e0"/><path d="M4.5 10.5l11-4.5-2 10-3.5-2.5-2 2v-3l5.5-4.5-7 4z" fill="#fff"/></svg>
<svg style="left:437px;top:871px" width="22" height="22" viewBox="0 0 22 22"><ellipse cx="11" cy="9" rx="9.5" ry="5" fill="none" stroke="#e85a6a" stroke-width="1.5" transform="rotate(-15 11 9)"/><path d="M8 9l6 8M14 9l-6 8" stroke="#4a70b8" stroke-width="1.4"/><circle cx="7.5" cy="18" r="2" fill="none" stroke="#4a70b8"/><circle cx="14.5" cy="18" r="2" fill="none" stroke="#4a70b8"/></svg>
<svg style="left:473px;top:871px" width="22" height="22" viewBox="0 0 22 22"><ellipse cx="10" cy="13" rx="8.5" ry="7" fill="#e2d8b8" stroke="#b8a878"/><circle cx="6" cy="11" r="1.5" fill="#e83a3a"/><circle cx="9" cy="8" r="1.5" fill="#3a8ae8"/><circle cx="13" cy="9" r="1.5" fill="#3ac84a"/><path d="M20 1L9 17" stroke="#d89a3a" stroke-width="2.2"/></svg>
<svg style="left:511px;top:871px" width="16" height="22" viewBox="0 0 16 22"><rect x="0.5" y="0.5" width="15" height="21" rx="1" fill="#5a6a7a"/><rect x="2" y="2" width="12" height="5" fill="#c8dcf0"/><g fill="#e8eef4"><rect x="2" y="9" width="3.4" height="2.6"/><rect x="6.3" y="9" width="3.4" height="2.6"/><rect x="10.6" y="9" width="3.4" height="2.6"/><rect x="2" y="13" width="3.4" height="2.6"/><rect x="6.3" y="13" width="3.4" height="2.6"/><rect x="2" y="17" width="3.4" height="2.6"/><rect x="6.3" y="17" width="3.4" height="2.6"/></g><rect x="10.6" y="13" width="3.4" height="6.6" fill="#2a6ad8"/></svg>
<svg style="left:544px;top:872px" width="21" height="20" viewBox="0 0 21 20"><rect x="0.5" y="0.5" width="20" height="19" rx="2" fill="#d81e1e"/><path d="M2 11c5-6 12-6 17 0" fill="none" stroke="#fff" stroke-width="2.5"/><circle cx="13" cy="11" r="4.2" fill="#fff"/><circle cx="13.5" cy="11" r="3.3" fill="#d81e1e"/></svg>

<svg style="left:579px;top:871px" width="22" height="23" viewBox="0 0 22 23"><path d="M10 1.5c5 0 8.5 3 8.5 8 0 5-3.5 8-8.5 8l-3 3v-3.5C3.5 15.5 1.5 13 1.5 9.5c0-5 3.5-8 8.5-8z" fill="#7a4ed8"/><path d="M7 6c0 4 3 7 7 7l1-1.5-2-1.2-1 .8c-1.2-.5-2.3-1.6-2.8-2.8l.8-1-1.2-2z" fill="#fff"/><circle cx="15.5" cy="17" r="5" fill="#e8402a"/><text x="13.2" y="20" font-size="7.5" fill="#fff" font-family="Liberation Sans">1</text></svg>
<div class="t" style="left:603px;top:877px;font-size:10.4px;color:#222">Rakuten ...</div>
<svg style="left:658px;top:871px" width="22" height="22" viewBox="0 0 22 22"><defs><linearGradient id="cpg" x1="0" y1="0" x2="1" y2="1"><stop offset="0" stop-color="#3ab0f0"/><stop offset=".45" stop-color="#9a5ae8"/><stop offset=".7" stop-color="#f06aa0"/><stop offset="1" stop-color="#f8c040"/></linearGradient></defs><path d="M6 2h8c2 0 3 1 3.5 3L21 17c.5 2-1 3-3 3H8c-2 0-3-1-3.5-3L1 5C.5 3 2 2 4 2z" fill="url(#cpg)"/><path d="M7 6h6l3 10H10z" fill="#fff" opacity=".35"/></svg>
<div class="t" style="left:684px;top:877px;font-size:10.4px;color:#222">Copilot</div>
<svg style="left:741px;top:871px" width="23" height="23" viewBox="0 0 23 23"><circle cx="10.5" cy="10.5" r="10" fill="#db4437"/><path d="M10.5 10.5L19.2 5.5A10 10 0 0 1 10.5 20.5z" fill="#f4c20d"/><path d="M10.5 10.5L10.5 20.5A10 10 0 0 1 1.8 5.5z" fill="#0f9d58"/><circle cx="10.5" cy="10.5" r="4.5" fill="#fff"/><circle cx="10.5" cy="10.5" r="3.5" fill="#4285f4"/><circle cx="16.5" cy="17" r="5" fill="#1e4a9a" stroke="#d3e3ed"/><text x="14.3" y="20" font-size="7" fill="#fff" font-family="Liberation Sans">S</text></svg>
<div class="t" style="left:766px;top:877px;font-size:10.4px;color:#222">Лекція 4...</div>
<svg style="left:822px;top:871px" width="21" height="22" viewBox="0 0 21 22"><ellipse cx="10.5" cy="11" rx="9.5" ry="10" fill="#e0262a"/><ellipse cx="10.5" cy="11" rx="4" ry="7" fill="#d3e3ed"/></svg>
<div class="t" style="left:846px;top:877px;font-size:10.4px;color:#222">Freeda S...</div>
<svg style="left:904px;top:871px" width="18" height="22" viewBox="0 0 18 22"><path d="M2 3l7-2v20l-7-1.5z" fill="#f8d060"/><path d="M9 1l7 2v15.5L9 21z" fill="#f0c040"/></svg>
<div class="t" style="left:927px;top:877px;font-size:10.4px;color:#222">Кармазі...</div>
<svg style="left:983px;top:870px" width="24" height="25" viewBox="0 0 24 25"><path d="M10 1.5a8.5 8.5 0 0 1 0 17c-1.5 0-3-.4-4-1l-4.5 1.5 1.3-4.2A8.5 8.5 0 0 1 10 1.5z" fill="none" stroke="#2aa84a" stroke-width="2"/><path d="M6.5 6.5c0 3.5 3 6.5 6.5 6.5l1-1.3-2-1.2-1 .8c-1-.5-2-1.5-2.6-2.6l.8-1-1.2-2z" fill="#2aa84a"/><circle cx="15" cy="18" r="6" fill="#6a6a6a" stroke="#d3e3ed"/><text x="12.3" y="21.5" font-size="9" fill="#fff" font-family="Liberation Sans">3</text></svg>
<div class="t" style="left:1008px;top:877px;font-size:10.4px;color:#222">WhatsA...</div>
<svg style="left:1063px;top:872px" width="22" height="20" viewBox="0 0 22 20"><rect x="6" y="0.5" width="15.5" height="19" rx="1.5" fill="#2b6ad0"/><path d="M6 5h15.5M6 10h15.5M6 15h15.5" stroke="#4a8ae8" stroke-width="1"/><rect x="0.5" y="4" width="11" height="12" rx="1" fill="#1a4ea8"/><text x="1.5" y="13.5" font-size="8.5" font-weight="bold" fill="#fff" font-family="Liberation Sans">W</text></svg>
<div class="t" style="left:1089px;top:877px;font-size:10.4px;color:#222">!!!!!!!!!!!!!!...</div>
<svg style="left:1145px;top:871px" width="22" height="22" viewBox="0 0 22 22"><circle cx="11" cy="11" r="10.5" fill="#2d6ef0"/><text x="2.5" y="14.5" font-size="9.5" font-weight="bold" fill="#fff" font-family="Liberation Sans">zm</text></svg>
<div class="t" style="left:1170px;top:877px;font-size:10.4px;color:#222">Zoom ...</div>
<div class="a" style="left:1222px;top:866px;width:77px;height:33px;background:#e9eff5"></div>
<svg style="left:1226px;top:871px" width="24" height="22" viewBox="0 0 24 22"><circle cx="13" cy="11" r="10.5" fill="#e8603a"/><path d="M13 0.5A10.5 10.5 0 0 1 23.5 11H13z" fill="#f08a5a"/><rect x="0.5" y="5" width="11" height="12" rx="1" fill="#c43e1c"/><text x="2.5" y="14.5" font-size="9" font-weight="bold" fill="#fff" font-family="Liberation Sans">P</text></svg>
<div class="t" style="left:1251px;top:877px;font-size:10.4px;color:#222">PowerP...</div>
<!-- underlines -->
<div class="a" style="left:577px;top:897px;width:74px;height:2px;background:#3d84d8"></div>
<div class="a" style="left:658px;top:897px;width:74px;height:2px;background:#3d84d8"></div>
<div class="a" style="left:740px;top:897px;width:74px;height:2px;background:#3d84d8"></div>
<div class="a" style="left:821px;top:897px;width:74px;height:2px;background:#3d84d8"></div>
<div class="a" style="left:902px;top:897px;width:74px;height:2px;background:#3d84d8"></div>
<div class="a" style="left:983px;top:897px;width:74px;height:2px;background:#3d84d8"></div>
<div class="a" style="left:1063px;top:897px;width:74px;height:2px;background:#3d84d8"></div>
<div class="a" style="left:1144px;top:897px;width:74px;height:2px;background:#3d84d8"></div>
<div class="a" style="left:1222px;top:897px;width:77px;height:2px;background:#2a78d8"></div>
<!-- tray -->
<svg style="left:1316px;top:871px" width="26" height="22" viewBox="0 0 26 22"><path d="M5 19a5 5 0 0 1 0-10 7 7 0 0 1 13 1 4.5 4.5 0 0 1 1 9z" fill="#c8dcf2"/><circle cx="14" cy="6" r="5" fill="#e8402a"/><text x="11.8" y="9" font-size="7.5" fill="#fff" font-family="Liberation Sans">1</text></svg>
<div class="t" style="left:1346px;top:876px;font-size:12px;color:#222">-10°C</div>
<svg style="left:1394px;top:878px" width="12" height="7" viewBox="0 0 12 7"><path d="M1 6l5-5 5 5" fill="none" stroke="#222" stroke-width="1.3"/></svg>
<svg style="left:1413px;top:873px" width="15" height="16" viewBox="0 0 15 16"><path d="M7 1c4 0 6.5 2.5 6.5 6s-2.5 6-6.5 6l-2 2v-2.3C2.5 12 1 10 1 7c0-3.5 2.5-6 6-6z" fill="#8a5ae0"/><circle cx="12" cy="3" r="2.5" fill="#e83a3a"/></svg>
<svg style="left:1433px;top:873px" width="17" height="16" viewBox="0 0 17 16"><rect x="4.5" y="1.5" width="12" height="9" fill="none" stroke="#222"/><path d="M10.5 10.5v3M7 14.5h7M0.5 3.5h4M0.5 7h4M2 0.5v15" fill="none" stroke="#222"/></svg>
<svg style="left:1453px;top:874px" width="15" height="14" viewBox="0 0 15 14"><path d="M1 4.5h3l4-3.5v12l-4-3.5H1z" fill="none" stroke="#222"/><path d="M10 4.5c1 1.5 1 3.5 0 5M12.5 2.5c2 2.5 2 6.5 0 9" fill="none" stroke="#222"/></svg>
<div class="t" style="left:1476px;top:876px;font-size:11px;color:#222">РУС</div>
<div class="t" style="left:1514px;top:869px;font-size:10.5px;color:#222">11:09</div>
<div class="t" style="left:1505px;top:884px;font-size:10px;color:#222">24.12.2025</div>
<svg style="left:1566px;top:872px" width="19" height="20" viewBox="0 0 19 20"><path d="M1 1h14v10H6l-3 3v-3H1z" fill="#111"/><path d="M3.5 4h9M3.5 7h9" stroke="#fff"/><circle cx="13" cy="14" r="5.5" fill="#d3e3ed" stroke="#555"/><text x="10.6" y="17.5" font-size="8.5" fill="#222" font-family="Liberation Sans">6</text></svg>
<div class="a" style="left:1596px;top:866px;width:1px;height:33px;background:#b0c0cc"></div>



</body></html>
